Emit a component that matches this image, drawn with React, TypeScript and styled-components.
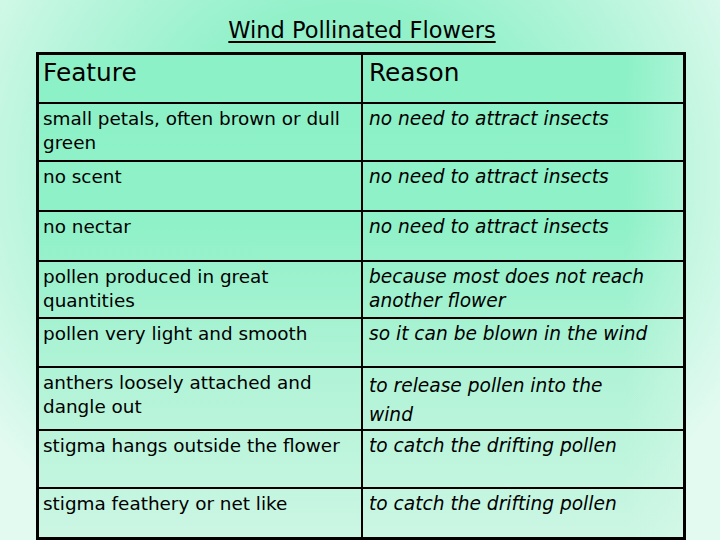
import React from "react";
import styled, { createGlobalStyle } from "styled-components";

const Global = createGlobalStyle`
  html, body { margin: 0; padding: 0; }
  body {
    width: 720px;
    height: 540px;
    overflow: hidden;
    font-family: "DejaVu Sans", "Noto Sans", sans-serif;
    color: #000;
  }
`;

const Page = styled.div`
  width: 720px;
  height: 540px;
  box-sizing: border-box;
  padding-left: 36px;
  background:
    radial-gradient(ellipse 62% 78% at 48% 32%, #8ef1c8 0%, #93f1ca 40%, #b8f5dc 70%, #e2faf0 100%);
  display: flex;
  flex-direction: column;
  overflow: hidden;
`;

const TitleBar = styled.div`
  width: 650px;
  height: 53px;
  display: flex;
  justify-content: center;
  align-items: flex-end;
  box-sizing: border-box;
  padding-bottom: 9px;
  padding-left: 2px;
`;

const Title = styled.h1`
  margin: 0;
  font-size: 22.5px;
  font-weight: normal;
  line-height: 26px;
  text-decoration: underline;
  text-decoration-thickness: 2px;
  text-underline-offset: 3px;
`;

const Table = styled.div`
  width: 650px;
  box-sizing: border-box;
  border: 3px solid #000;
  background:
    linear-gradient(to right, rgba(255,255,255,0) 91%, rgba(225,250,238,0.35) 100%),
    linear-gradient(to bottom, #8cf1c7 0%, #8ff1c8 35%, #b0f3d6 65%, #cbf6e3 100%);
`;

const Row = styled.div<{ $h: number; $first?: boolean }>`
  display: grid;
  grid-template-columns: 322px 1fr;
  height: ${(p) => p.$h}px;
  box-sizing: border-box;
  border-top: ${(p) => (p.$first ? "none" : "2px solid #000")};
`;

const Cell = styled.div<{ $reason?: boolean; $head?: boolean; $lh?: number }>`
  box-sizing: border-box;
  padding-top: 3px;
  padding-left: ${(p) => (p.$reason ? "6px" : "4px")};
  border-left: ${(p) => (p.$reason ? "2px solid #000" : "none")};
  font-size: ${(p) => (p.$head ? "24.8px" : p.$reason ? "18.6px" : "18.4px")};
  line-height: ${(p) => (p.$head ? "30px" : `${p.$lh ?? 24}px`)};
  font-style: ${(p) => (p.$reason && !p.$head ? "italic" : "normal")};
  white-space: pre-line;
`;

const rows: { f: string; r: string; h: number; rlh?: number }[] = [
  { f: "small petals, often brown or dull\ngreen", r: "no need to attract insects", h: 58 },
  { f: "no scent", r: "no need to attract insects", h: 50 },
  { f: "no nectar", r: "no need to attract insects", h: 50 },
  { f: "pollen produced in great\nquantities", r: "because most does not reach\nanother flower", h: 57 },
  { f: "pollen very light and smooth", r: "so it can be blown in the wind", h: 49 },
  { f: "anthers loosely attached and\ndangle out", r: "to release pollen into the\nwind", h: 63, rlh: 29 },
  { f: "stigma hangs outside the flower", r: "to catch the drifting pollen", h: 58 },
  { f: "stigma feathery or net like", r: "to catch the drifting pollen", h: 50 },
];

export default function App() {
  return (
    <>
      <Global />
      <Page>
        <TitleBar>
          <Title>Wind Pollinated Flowers</Title>
        </TitleBar>
        <Table>
          <Row $h={47} $first>
            <Cell $head>Feature</Cell>
            <Cell $head $reason>Reason</Cell>
          </Row>
          {rows.map((row, i) => (
            <Row key={i} $h={row.h}>
              <Cell>{row.f}</Cell>
              <Cell $reason $lh={row.rlh}>{row.r}</Cell>
            </Row>
          ))}
        </Table>
      </Page>
    </>
  );
}
